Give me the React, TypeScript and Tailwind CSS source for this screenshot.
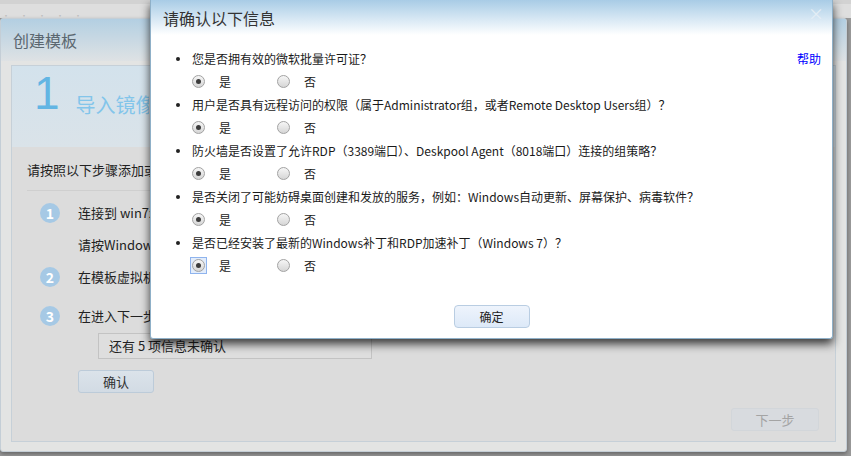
import React from 'react';

const questions = [
  '您是否拥有效的微软批量许可证？',
  '用户是否具有远程访问的权限（属于Administrator组，或者Remote Desktop Users组）？',
  '防火墙是否设置了允许RDP（3389端口）、Deskpool Agent（8018端口）连接的组策略？',
  '是否关闭了可能妨碍桌面创建和发放的服务，例如：Windows自动更新、屏幕保护、病毒软件？',
  '是否已经安装了最新的Windows补丁和RDP加速补丁（Windows 7）？',
];

function Radio({ checked, focused }: { checked?: boolean; focused?: boolean }) {
  return (
    <span
      className={`w-[17px] h-[17px] flex items-center justify-center ${
        focused ? 'border border-[#8fb4ee] bg-[#e3edfb]' : ''
      }`}
    >
      <span className="w-[13px] h-[13px] rounded-full border border-[#a2a2a2] bg-gradient-to-b from-[#f6f6f6] to-[#d6d6d6] flex items-center justify-center">
        {checked && <span className="w-[5px] h-[5px] rounded-full bg-[#3c3c3c]" />}
      </span>
    </span>
  );
}

function StepDot({ n }: { n: number }) {
  return (
    <span className="w-[20px] h-[20px] rounded-full bg-[#a6c9e5] text-white text-[14px] font-bold flex items-center justify-center shrink-0">
      {n}
    </span>
  );
}

export default function App() {
  return (
    <div className="relative w-[851px] h-[456px] overflow-hidden bg-[#9a9a9a] font-['Noto_Sans_CJK_SC',sans-serif] text-[#222]">
      {/* page strip behind everything */}
      <div className="h-[18px] bg-[#dedede] border-t-[4px] border-t-[#d2d2d2] pt-[8px] pl-[2px] text-[8px] leading-none text-[#bcbcbc] tracking-[10px]">
        ·····
      </div>

      {/* background wizard dialog */}
      <div className="w-[847px] h-[434px] bg-[#e3e4e3] rounded-t-[3px] rounded-b-[3px] border border-[#c4ced6] flex flex-col shadow-[0_2px_4px_rgba(0,0,0,0.35)]">
        <div className="h-[42px] shrink-0 bg-gradient-to-b from-[#b3cfe2] to-[#dee2e4] pl-[12px] flex items-center text-[16px] text-[#5b6770]">
          创建模板
        </div>
        <div className="flex-1 mx-[10px] mt-[4px] mb-[9px] border border-[#c6d0d8] bg-[#dcdcdc] flex flex-col">
          <div className="h-[81px] shrink-0 bg-gradient-to-b from-[#d3e2ec] to-[#dae3e9] flex items-start pl-[22px] pt-[2px]">
            <span className="text-[46px] leading-[50px] text-[#62b5e3] font-['Liberation_Sans',sans-serif]">1</span>
            <span className="ml-[16px] mt-[22px] w-[73px] overflow-hidden whitespace-nowrap text-[20px] text-[#83c5ea]">导入镜像文件</span>
          </div>
          <div className="pl-[15px] pr-[15px]">
            <div className="h-[44px] flex items-center text-[13px] border-b border-[#cfcfcf] pt-[2px]">
              <span className="w-[123px] overflow-hidden whitespace-nowrap">请按照以下步骤添加或编辑模板</span>
            </div>
            <div className="pl-[13px] pt-[11px] flex flex-col text-[13px]">
              <div className="h-[22px] flex items-center gap-[18px]">
                <StepDot n={1} />
                <span className="w-[73px] overflow-hidden whitespace-nowrap">连接到 win7x64 模板虚拟机</span>
              </div>
              <div className="h-[42px] flex items-center pl-[38px]">
                <span className="w-[73px] overflow-hidden whitespace-nowrap">请按Windows提示完成安装</span>
              </div>
              <div className="h-[22px] flex items-center gap-[18px]">
                <StepDot n={2} />
                <span className="w-[73px] overflow-hidden whitespace-nowrap">在模板虚拟机中安装 Agent</span>
              </div>
              <div className="h-[17px]" />
              <div className="h-[22px] flex items-center gap-[18px]">
                <StepDot n={3} />
                <span className="w-[73px] overflow-hidden whitespace-nowrap">在进入下一步之前请确认</span>
              </div>
              <div className="ml-[58px] mt-[6px] w-[274px] h-[26px] border border-[#c3c3c3] bg-[#dedede] flex items-center pl-[10px]">
                还有 5 项信息未确认
              </div>
              <div className="ml-[38px] mt-[11px] w-[76px] h-[23px] rounded-[3px] border border-[#bccbd9] bg-gradient-to-b from-[#dbe3ea] to-[#d2dbe4] flex items-center justify-center text-[#333]">
                确认
              </div>
            </div>
            <div className="flex justify-end mt-[15px] pr-[1px]">
              <div className="w-[88px] h-[23px] rounded-[3px] border border-[#d2d6da] bg-[#d8dbdf] flex items-center justify-center text-[13px] text-[#a4a4a4]">
                下一步
              </div>
            </div>
          </div>
        </div>
      </div>

      {/* confirm modal */}
      <div className="absolute left-[150px] top-0 w-[683px] h-[339px] bg-white border-l border-r border-b border-[#8fb0c8] rounded-b-[3px] shadow-[0_5px_10px_rgba(0,0,0,0.75)] flex flex-col">
        <div className="h-[35px] shrink-0 bg-gradient-to-b from-[#a8cce6] to-[#ffffff] flex items-center justify-between pl-[12px] pr-[8px]">
          <span className="text-[16px] text-[#333]">请确认以下信息</span>
          <span className="text-[16px] leading-none text-[#e4eef5] -mt-[10px]">×</span>
        </div>
        <div className="flex-1 flex flex-col pt-[12px] pl-[25px] pr-[11px]">
          {questions.map((q, i) => (
            <div key={i} className="flex flex-col">
              <div className="h-[23px] flex items-center text-[12px] text-[#1a1a1a]">
                <span className="w-[4px] h-[4px] rounded-full bg-[#222] mr-[12px]" />
                <span className="flex-1">{q}</span>
                {i === 0 && <span className="text-[#0000ff]">帮助</span>}
              </div>
              <div className="h-[23px] flex items-center pl-[14px] text-[12px]">
                <Radio checked focused={i === 4} />
                <span className="ml-[12px] w-[56px]">是</span>
                <Radio />
                <span className="ml-[12px]">否</span>
              </div>
            </div>
          ))}
          <div className="flex justify-center mt-[28px] pr-[14px]">
            <div className="w-[76px] h-[23px] rounded-[4px] border border-[#b9cde2] bg-gradient-to-b from-[#eef4fc] to-[#dde9f8] flex items-center justify-center text-[12px] text-[#222]">
              确定
            </div>
          </div>
        </div>
      </div>
    </div>
  );
}
